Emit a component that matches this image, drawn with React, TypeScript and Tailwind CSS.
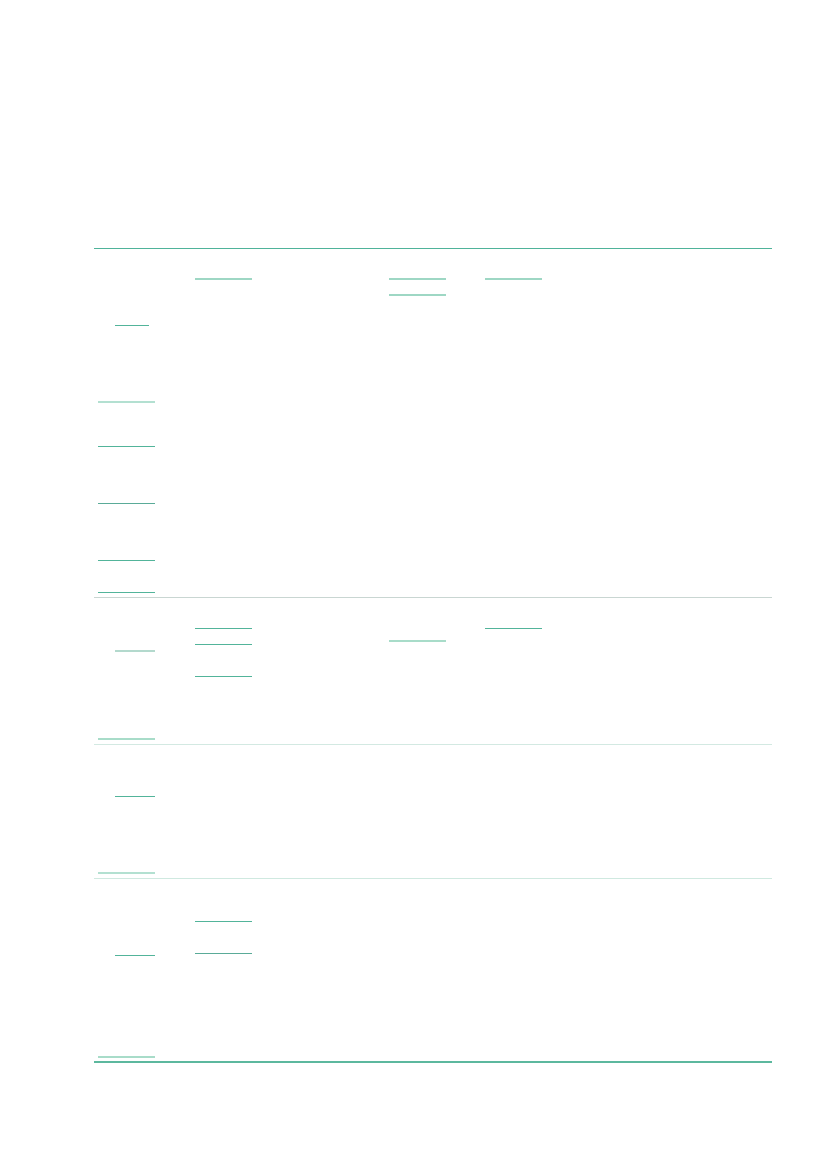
import React from "react";

// underline of a link whose text is not drawn
const Link: React.FC<{ className: string }> = ({ className }) => (
  <a className={"block " + className} aria-hidden="true" />
);

const App: React.FC = () => {
  return (
    <div className="min-h-[1169px] w-[827px] bg-white pt-[248px] font-['Liberation_Sans',sans-serif]">
      <div className="ml-[94px] w-[678px]">
        {/* Group 1 */}
        <div className="grid h-[349px] grid-cols-7 border-t border-[#4fb39a]">
          <div className="flex flex-col">
            <Link className="ml-[21px] mt-[76px] h-px w-[34px] bg-[#52b49a]" />
            <Link className="ml-[4px] mt-[75px] h-[2px] w-[57px] bg-[#b3e0d1]" />
            <Link className="ml-[4px] mt-[43px] h-px w-[57px] bg-[#52b49a]" />
            <Link className="ml-[4px] mt-[56px] h-px w-[57px] bg-[#5aab98]" />
            <Link className="ml-[4px] mt-[56px] h-px w-[57px] bg-[#52b49a]" />
            <Link className="ml-[4px] mt-[31px] h-px w-[57px] bg-[#52b49a]" />
          </div>
          <div className="flex flex-col">
            <Link className="ml-[4px] mt-[29px] h-[2px] w-[57px] bg-[#9ed7c4]" />
          </div>
          <div />
          <div className="flex flex-col">
            <Link className="ml-[4px] mt-[29px] h-[2px] w-[57px] bg-[#9ed7c4]" />
            <Link className="ml-[4px] mt-[14px] h-[2px] w-[57px] bg-[#9ed7c4]" />
          </div>
          <div className="flex flex-col">
            <Link className="ml-[4px] mt-[29px] h-[2px] w-[57px] bg-[#9ed7c4]" />
          </div>
          <div />
          <div />
        </div>

        {/* Group 2 */}
        <div className="grid h-[147px] grid-cols-7 border-t border-[#c9d6d2]">
          <div className="flex flex-col">
            <Link className="ml-[21px] mt-[52px] h-[2px] w-[40px] bg-[#b3d9cd]" />
            <Link className="ml-[4px] mt-[86px] h-[2px] w-[57px] bg-[#a8dcc9]" />
          </div>
          <div className="flex flex-col">
            <Link className="ml-[4px] mt-[30px] h-px w-[57px] bg-[#52b49a]" />
            <Link className="ml-[4px] mt-[15px] h-px w-[57px] bg-[#52b49a]" />
            <Link className="ml-[4px] mt-[31px] h-px w-[57px] bg-[#52b49a]" />
          </div>
          <div />
          <div className="flex flex-col">
            <Link className="ml-[4px] mt-[42px] h-[2px] w-[57px] bg-[#a8dcc9]" />
          </div>
          <div className="flex flex-col">
            <Link className="ml-[4px] mt-[30px] h-px w-[57px] bg-[#52b49a]" />
          </div>
          <div />
          <div />
        </div>

        {/* Group 3 */}
        <div className="grid h-[134px] grid-cols-7 border-t border-[#d3e9e2]">
          <div className="flex flex-col">
            <Link className="ml-[21px] mt-[51px] h-px w-[40px] bg-[#52b49a]" />
            <Link className="ml-[4px] mt-[75px] h-[2px] w-[57px] bg-[#b3e0d1]" />
          </div>
          <div />
          <div />
          <div />
          <div />
          <div />
          <div />
        </div>

        {/* Group 4 */}
        <div className="grid h-[185px] grid-cols-7 border-t border-b-2 border-t-[#cfe9e0] border-b-[#5cb89e]">
          <div className="flex flex-col">
            <Link className="ml-[21px] mt-[76px] h-px w-[40px] bg-[#52b49a]" />
            <Link className="ml-[4px] mt-[100px] h-[2px] w-[57px] bg-[#a8dcc9]" />
          </div>
          <div className="flex flex-col">
            <Link className="ml-[4px] mt-[42px] h-px w-[57px] bg-[#52b49a]" />
            <Link className="ml-[4px] mt-[31px] h-px w-[57px] bg-[#5aab98]" />
          </div>
          <div />
          <div />
          <div />
          <div />
          <div />
        </div>
      </div>
    </div>
  );
};

export default App;
